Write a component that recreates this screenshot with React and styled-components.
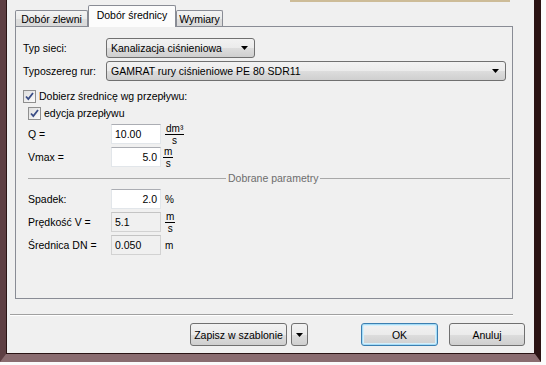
import React from 'react';
import styled, { createGlobalStyle } from 'styled-components';

const GlobalStyle = createGlobalStyle`
  html, body {
    margin: 0;
    padding: 0;
    background: #fbfbfb;
  }
  body {
    font-family: "Liberation Sans", Arial, sans-serif;
    font-size: 10.5px;
    color: #000;
  }
  #root {
    width: 546px;
    height: 365px;
    overflow: hidden;
  }
`;

const WindowFrame = styled.div`
  width: 541px;
  height: 362px;
  box-sizing: border-box;
  display: flex;
  border-left: 6px solid #5e3f43;
  border-right: 6px solid #2a1313;
  border-bottom: 8px solid #8a6c70;
`;

const Dialog = styled.div`
  flex: 1;
  display: flex;
  flex-direction: column;
  background: #f0f0f0;
  border: 1px solid #2a1414;
  border-top: none;
`;

const TopStrip = styled.div`
  height: 3px;
  display: flex;
`;

const TitleEdge = styled.div`
  margin-left: 283px;
  width: 220px;
  height: 2px;
  background: #cdbc98;
`;

const TabArea = styled.div`
  padding: 2px 0 0 8px;
`;

const TabStrip = styled.div`
  display: flex;
  align-items: flex-end;
  height: 21px;
  position: relative;
  z-index: 1;
`;

const Tab = styled.div`
  box-sizing: border-box;
  width: ${p => p.$width}px;
  height: ${p => (p.$active ? 22 : 16)}px;
  margin-bottom: ${p => (p.$active ? -1 : 0)}px;
  border: 1px solid #898c95;
  border-bottom: none;
  border-radius: 2px 2px 0 0;
  background: ${p =>
    p.$active ? '#fcfcfc' : 'linear-gradient(#f3f3f3, #ebebeb 50%, #dedede 51%, #dadada)'};
  display: flex;
  align-items: ${p => (p.$active ? 'flex-start' : 'center')};
  justify-content: center;
  padding-top: ${p => (p.$active ? 3 : 0)}px;
  color: #000;
  white-space: nowrap;
`;

const Panel = styled.div`
  box-sizing: border-box;
  width: 498px;
  height: 273px;
  border: 1px solid #898c95;
  background: #f0f0f0;
  padding: 11px 0 0 7px;
  display: flex;
  flex-direction: column;
`;

const Row = styled.div`
  display: flex;
  align-items: center;
  height: ${p => p.$height || 20}px;
  margin-top: ${p => p.$gap || 0}px;
  padding-left: ${p => p.$indent || 0}px;
`;

const Label = styled.span`
  width: ${p => p.$width || 83}px;
  flex-shrink: 0;
  white-space: nowrap;
`;

const Combo = styled.div`
  box-sizing: border-box;
  width: ${p => p.$width}px;
  height: 20px;
  border: 1px solid #707070;
  border-radius: 3px;
  background: linear-gradient(#f2f2f2, #ebebeb 50%, #dddddd 51%, #cfcfcf);
  display: flex;
  align-items: center;
  padding: 0 6px 0 4px;
`;

const ComboText = styled.span`
  flex: 1;
  white-space: nowrap;
  overflow: hidden;
`;

const DownArrow = () => (
  <svg width="7" height="4" viewBox="0 0 7 4">
    <path d="M0 0h7L3.5 4z" fill="#000" />
  </svg>
);

const CheckBox = styled.span`
  box-sizing: border-box;
  width: 13px;
  height: 13px;
  border: 1px solid #8f8f8f;
  background: linear-gradient(135deg, #dedede, #fbfbfb);
  display: inline-flex;
  align-items: center;
  justify-content: center;
  margin-right: 3px;
  flex-shrink: 0;
`;

const Tick = () => (
  <svg width="9" height="9" viewBox="0 0 9 9">
    <path d="M1 4.5l2.3 2.5L8 1" fill="none" stroke="#3a4d86" strokeWidth="1.8" />
  </svg>
);

const Field = styled.div`
  box-sizing: border-box;
  width: 50px;
  height: 20px;
  display: flex;
  align-items: center;
  justify-content: ${p => (p.$right ? 'flex-end' : 'flex-start')};
  padding: 0 3px;
  background: ${p => (p.$readOnly ? '#f0f0f0' : '#fff')};
  border: 1px solid ${p => (p.$readOnly ? '#d2d2d2' : '#e2e6ea')};
  border-top-color: ${p => (p.$readOnly ? '#c4c4c4' : '#abadb3')};
  color: #000;
`;

const Unit = styled.span`
  margin-left: ${p => p.$offset || 4}px;
  font-size: 10px;
`;

const Fraction = styled.span`
  display: inline-flex;
  flex-direction: column;
  align-items: center;
  margin-left: ${p => p.$offset || 4}px;
  font-size: 10px;
  line-height: 9px;
`;

const Numerator = styled.span`
  border-bottom: 1px solid #000;
  padding: 0 1px 1px;
`;

const Denominator = styled.span`
  padding-top: 1px;
`;

const GroupDivider = styled.div`
  display: flex;
  align-items: center;
  height: 14px;
  margin: 4px 2px 0 5px;
`;

const GroupLine = styled.span`
  height: 1px;
  background: #a8a8a8;
  ${p => (p.$width ? `width: ${p.$width}px;` : 'flex: 1;')}
`;

const GroupTitle = styled.span`
  color: #6d6d6d;
  padding: 0 2px;
  white-space: nowrap;
`;

const Separator = styled.div`
  margin: 15px 21px 0 3px;
  border-top: 1px solid #a0a0a0;
  border-bottom: 1px solid #fff;
`;

const ButtonBar = styled.div`
  display: flex;
  justify-content: flex-end;
  align-items: center;
  margin-top: 7px;
  padding-right: 9px;
`;

const SplitGroup = styled.div`
  display: flex;
  gap: 4px;
  margin-right: 53px;
`;

const Button = styled.div`
  box-sizing: border-box;
  width: ${p => p.$width}px;
  height: 23px;
  border: 1px solid ${p => (p.$default ? '#3c7fb1' : '#707070')};
  border-radius: 3px;
  background: linear-gradient(#f2f2f2, #ebebeb 50%, #dddddd 51%, #cfcfcf);
  ${p => (p.$default ? 'box-shadow: inset 0 0 0 1px #a6dcf6, inset 0 0 0 2px #d6effb;' : '')}
  display: flex;
  align-items: center;
  justify-content: center;
  white-space: nowrap;
  margin-left: ${p => p.$gap || 0}px;
`;

const App = () => {
  return (
    <>
      <GlobalStyle />
      <WindowFrame>
        <Dialog>
          <TopStrip>
            <TitleEdge />
          </TopStrip>
          <TabArea>
            <TabStrip>
              <Tab $width={73}>Dobór zlewni</Tab>
              <Tab $width={88} $active>Dobór średnicy</Tab>
              <Tab $width={47}>Wymiary</Tab>
            </TabStrip>
            <Panel>
              <Row>
                <Label>Typ sieci:</Label>
                <Combo $width={149}>
                  <ComboText>Kanalizacja ciśnieniowa</ComboText>
                  <DownArrow />
                </Combo>
              </Row>
              <Row $gap={3}>
                <Label>Typoszereg rur:</Label>
                <Combo $width={400}>
                  <ComboText>GAMRAT rury ciśnieniowe PE 80 SDR11</ComboText>
                  <DownArrow />
                </Combo>
              </Row>
              <Row $gap={8} $height={14}>
                <CheckBox><Tick /></CheckBox>
                Dobierz średnicę wg przepływu:
              </Row>
              <Row $gap={3} $height={14} $indent={5}>
                <CheckBox><Tick /></CheckBox>
                edycja przepływu
              </Row>
              <Row $gap={4} $indent={5}>
                <Label>Q =</Label>
                <Field>10.00</Field>
                <Fraction>
                  <Numerator>dm³</Numerator>
                  <Denominator>s</Denominator>
                </Fraction>
              </Row>
              <Row $gap={3} $indent={5}>
                <Label>Vmax =</Label>
                <Field $right>5.0</Field>
                <Fraction $offset={2}>
                  <Numerator>m</Numerator>
                  <Denominator>s</Denominator>
                </Fraction>
              </Row>
              <GroupDivider>
                <GroupLine $width={198} />
                <GroupTitle>Dobrane parametry</GroupTitle>
                <GroupLine />
              </GroupDivider>
              <Row $gap={4} $indent={5}>
                <Label>Spadek:</Label>
                <Field $right>2.0</Field>
                <Unit>%</Unit>
              </Row>
              <Row $gap={3} $indent={5}>
                <Label>Prędkość V =</Label>
                <Field $readOnly>5.1</Field>
                <Fraction>
                  <Numerator>m</Numerator>
                  <Denominator>s</Denominator>
                </Fraction>
              </Row>
              <Row $gap={3} $indent={5}>
                <Label>Średnica DN =</Label>
                <Field $readOnly>0.050</Field>
                <Unit>m</Unit>
              </Row>
            </Panel>
          </TabArea>
          <Separator />
          <ButtonBar>
            <SplitGroup>
              <Button $width={97}>Zapisz w szablonie</Button>
              <Button $width={17}><DownArrow /></Button>
            </SplitGroup>
            <Button $width={77} $default>OK</Button>
            <Button $width={76} $gap={11}>Anuluj</Button>
          </ButtonBar>
        </Dialog>
      </WindowFrame>
    </>
  );
};

export default App;
